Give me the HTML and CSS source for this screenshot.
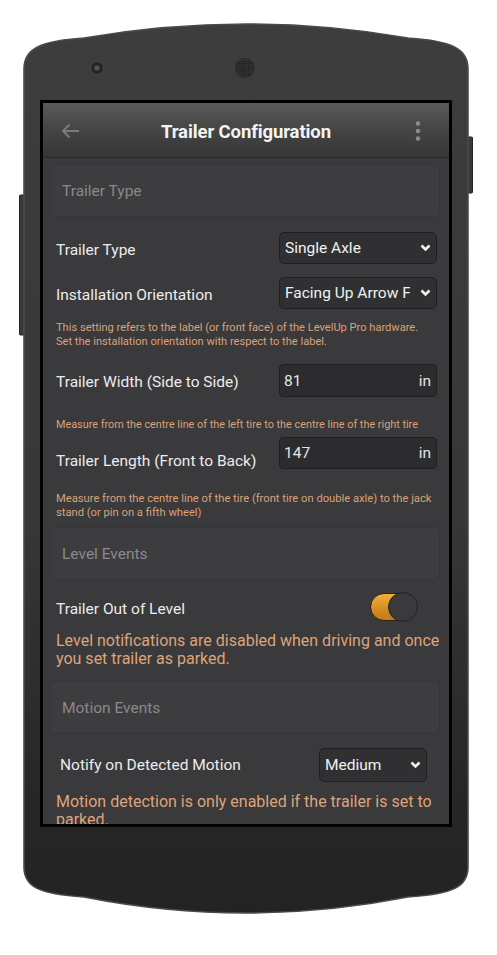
FILE: index.html
```html
<!DOCTYPE html>
<html lang="en">
<head>
<meta charset="utf-8">
<title>Trailer Configuration</title>
<link rel="stylesheet" href="styles.css">
</head>
<body>
<div class="device">
  <div class="screen">
    <header class="appbar">
      <svg class="back" width="19" height="16" viewBox="0 0 19 16"><path d="M18 8H2M8.5 1.5L2 8l6.5 6.5" fill="none" stroke="#7b7b7b" stroke-width="2"/></svg>
      <h1 class="title">Trailer Configuration</h1>
      <svg class="kebab" width="6" height="20" viewBox="0 0 6 20"><circle cx="3" cy="2.5" r="2.3" fill="#8c8c8c"/><circle cx="3" cy="10" r="2.3" fill="#8c8c8c"/><circle cx="3" cy="17.5" r="2.3" fill="#8c8c8c"/></svg>
    </header>
    <main class="content">
      <div class="section-card">Trailer Type</div>

      <div class="row row-type">
        <span class="label">Trailer Type</span>
        <div class="select"><span class="sel-text">Single Axle</span><svg class="chev" width="11" height="8" viewBox="0 0 11 8"><path d="M1.5 1.5l4 4 4-4" fill="none" stroke="#f2f2f2" stroke-width="2.6"/></svg></div>
      </div>

      <div class="row row-orient">
        <span class="label">Installation Orientation</span>
        <div class="select"><span class="sel-text clip">Facing Up Arrow Forward</span><svg class="chev" width="11" height="8" viewBox="0 0 11 8"><path d="M1.5 1.5l4 4 4-4" fill="none" stroke="#f2f2f2" stroke-width="2.6"/></svg></div>
      </div>

      <p class="note note-orient">This setting refers to the label (or front face) of the LevelUp Pro hardware. Set the installation orientation with respect to the label.</p>

      <div class="row row-width">
        <span class="label">Trailer Width (Side to Side)</span>
        <div class="input"><span>81</span><span>in</span></div>
      </div>

      <p class="note note-width">Measure from the centre line of the left tire to the centre line of the right tire</p>

      <div class="row row-length">
        <span class="label label-low">Trailer Length (Front to Back)</span>
        <div class="input"><span>147</span><span>in</span></div>
      </div>

      <p class="note note-length">Measure from the centre line of the tire (front tire on double axle) to the jack stand (or pin on a fifth wheel)</p>

      <div class="section-card card-level">Level Events</div>

      <div class="row row-toggle">
        <span class="label">Trailer Out of Level</span>
        <div class="toggle"><span class="track"></span><span class="knob"></span></div>
      </div>

      <p class="note-lg note-level">Level notifications are disabled when driving and once you set trailer as parked.</p>

      <div class="section-card card-motion">Motion Events</div>

      <div class="row row-motion">
        <span class="label label-motion">Notify on Detected Motion</span>
        <div class="select select-sm"><span class="sel-text">Medium</span><svg class="chev" width="11" height="8" viewBox="0 0 11 8"><path d="M1.5 1.5l4 4 4-4" fill="none" stroke="#f2f2f2" stroke-width="2.6"/></svg></div>
      </div>

      <p class="note-lg note-motion">Motion detection is only enabled if the trailer is set to parked.</p>
    </main>
  </div>
</div>
</body>
</html>
```
FILE: styles.css
```css
* { box-sizing: border-box; }

html, body {
  margin: 0;
  padding: 0;
  background: #ffffff;
}

body {
  font-family: Roboto, "Noto Sans", "Liberation Sans", sans-serif;
}

.device {
  width: 497px;
  height: 955px;
  padding-top: 100px;
  padding-left: 40px;
  background-repeat: no-repeat;
  background-image: url("data:image/svg+xml,<svg xmlns='http://www.w3.org/2000/svg' width='497' height='955' viewBox='0 0 497 955'><defs><linearGradient id='g' x1='0' y1='0' x2='0' y2='1'><stop offset='0' stop-color='%233d3d3d'/><stop offset='0.55' stop-color='%23373737'/><stop offset='0.86' stop-color='%23272727'/><stop offset='1' stop-color='%23232323'/></linearGradient><pattern id='p' width='2.4' height='2.4' patternUnits='userSpaceOnUse'><circle cx='1.2' cy='1.2' r='0.7' fill='%23141414'/></pattern></defs><rect x='19.5' y='195' width='6' height='140' rx='1' fill='%23393939' stroke='%23242424'/><rect x='466.5' y='137' width='6' height='56' rx='1' fill='%23393939' stroke='%23242424'/><path d='M24 69C24 49 39 41 84 38Q246 10 408 38C453 41 468 49 468 69L468 867C468 887 453 894 408 897Q246 929 84 897C39 894 24 887 24 867Z' fill='url(%23g)' stroke='%234b4b4b' stroke-width='1.6'/><circle cx='97' cy='68' r='6.5' fill='%23252527' stroke='%23474747'/><circle cx='97' cy='68' r='2.6' fill='%23555557'/><circle cx='245' cy='68' r='10' fill='%23333333'/><circle cx='245' cy='68' r='10' fill='url(%23p)'/></svg>");
}

.screen {
  width: 412px;
  height: 727px;
  border: 3px solid #000;
  background: #3a393b;
  overflow: hidden;
  display: flex;
  flex-direction: column;
}

/* App bar */
.appbar {
  height: 55px;
  flex: none;
  display: grid;
  grid-template-columns: 1fr auto 1fr;
  align-items: center;
  padding-top: 4px;
  background: linear-gradient(#5a5a5a, #464646 45%, #363636);
  border-bottom: 1px solid #2a2a2a;
}

.back {
  margin-left: 18px;
  margin-top: -2px;
  justify-self: start;
}

.title {
  margin: 0;
  font-size: 18.5px;
  font-weight: 700;
  color: #f4f4f4;
  letter-spacing: -0.1px;
}

.kebab {
  justify-self: end;
  margin-right: 28px;
  margin-top: -3px;
}

/* Content */
.content {
  padding: 6px 9px 0 7px;
}

.section-card {
  height: 53px;
  display: flex;
  align-items: center;
  padding-left: 11px;
  background: #3d3c3f;
  border: 1px solid #363538;
  border-radius: 5px;
  font-size: 15.5px;
  color: #8a898c;
}

.row {
  display: flex;
  justify-content: space-between;
  align-items: center;
  padding: 0 3px 0 6px;
}

.label {
  padding-top: 3px;
  font-size: 15.5px;
  color: #ececec;
}

.label-motion {
  padding-top: 0;
}

.select {
  width: 158px;
  height: 32px;
  display: flex;
  align-items: center;
  justify-content: space-between;
  padding: 0 5px 0 5px;
  background: #303032;
  border: 1px solid #202022;
  border-radius: 5px;
  color: #f0f0f0;
  font-size: 15.5px;
}

.sel-text {
  white-space: nowrap;
}

.sel-text.clip {
  width: 125px;
  overflow: hidden;
}

.chev {
  flex: none;
}

.input {
  width: 158px;
  height: 33px;
  display: flex;
  align-items: center;
  justify-content: space-between;
  padding: 0 5px 0 4px;
  background: #2c2c2e;
  border: 1px solid #202022;
  border-radius: 4px;
  color: #e4e4e4;
  font-size: 15.5px;
}

.row-length .input {
  height: 32px;
  align-items: flex-start;
  padding-top: 6px;
}

.note {
  margin: 0;
  padding: 0 0 0 6px;
  font-size: 11.1px;
  line-height: 14px;
  color: #d9a27a;
}

.note-orient {
  font-size: 11.1px;
  padding-right: 16px;
}

.note-width {
  font-size: 10.85px;
}

.note-length {
  font-size: 11.2px;
  line-height: 13.5px;
}

.note-lg {
  margin: 0;
  padding: 0 0 0 6px;
  font-size: 16px;
  line-height: 18px;
  color: #dea47a;
}

.row-type { margin-top: 15px; }
.row-orient { margin-top: 13px; }
.note-orient { margin-top: 12px; }
.row-width { margin-top: 15px; }
.note-width { margin-top: 21px; }
.row-length { margin-top: 5px; align-items: flex-start; }
.label-low { margin-top: 12px; }
.note-length { margin-top: 22px; }
.card-level { margin-top: 8px; }
.row-toggle { margin-top: 12px; }
.note-level { margin-top: 10px; }
.card-motion { margin-top: 13px; }
.row-motion { margin-top: 14px; padding: 0 13px 0 10px; }
.select-sm { width: 108px; height: 34px; }
.note-motion { margin-top: 11px; }

/* Toggle */
.toggle {
  position: relative;
  width: 48px;
  height: 30px;
  margin-right: 19px;
}

.track {
  display: block;
  position: absolute;
  left: 0;
  top: 1px;
  width: 42px;
  height: 28px;
  border-radius: 14px;
  background: linear-gradient(#f2ae3a, #d38c22 60%, #c07a18);
  border: 1px solid #2a2418;
}

.knob {
  position: absolute;
  right: 0;
  top: 0;
  width: 30px;
  height: 30px;
  border-radius: 50%;
  background: #3a3a3c;
  border: 1.5px solid #232325;
}
```
